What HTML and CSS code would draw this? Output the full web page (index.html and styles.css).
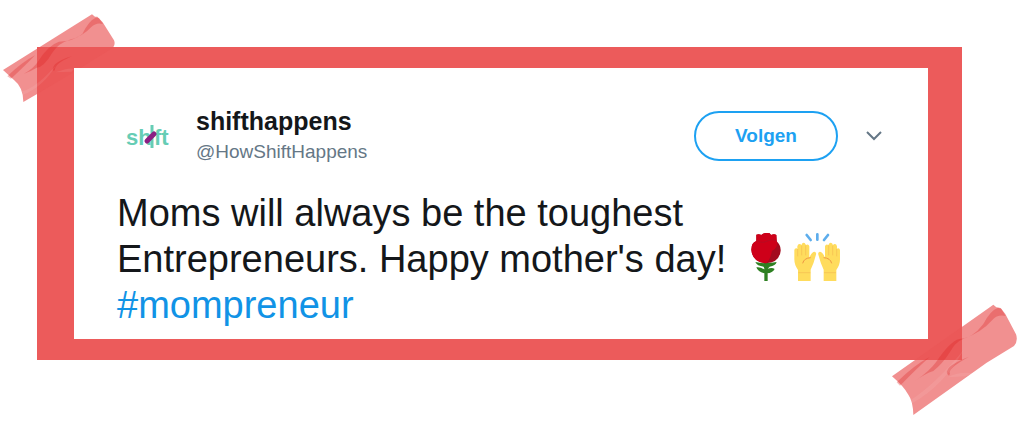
FILE: index.html
```html
<!DOCTYPE html>
<html lang="nl">
<head>
  <meta charset="UTF-8" />
  <meta name="viewport" content="width=device-width, initial-scale=1.0"/>
  <title>shifthappens</title>
  <link rel="stylesheet" href="styles.css">
</head>
<body>
  <main class="frame">
    <svg class="tape tape-top" viewBox="0 0 390 345" aria-hidden="true">
      <path class="tape-base" d="M9 210 L276 43 L285 50 L292 50 L308 67 L342 121 Q347 132 339 143 L222 216 L110 283 L70 306 Q70 262 42 240 Z"/>
      <path class="crease" d="M22 229 Q65 187 105 166 Q82 191 33 236 Z"/>
      <path class="crease" d="M72 221 Q103 204 115 183 Q145 135 177 125 Q220 124 247 102 Q266 62 287 53 L297 54 L309 72 Q289 66 274 81 Q248 110 205 121 Q176 130 157 158 Q132 201 110 203 Q92 214 72 221 Z"/>
      <path class="crease" d="M159 212 Q153 188 215 169 Q162 192 165 211 Z"/>
      <path class="shine" d="M66 274 Q110 263 169 194 Q130 260 69 284 Z"/>
      <path class="shine" d="M166 217 Q205 202 222 206 L215 215 Z"/>
    </svg>
    <svg class="tape tape-bottom" viewBox="0 0 432 378" aria-hidden="true">
      <path class="tape-base" d="M36 244 L340 29 L349 37 L362 39 L376 57 L408 118 Q415 137 402 153 L320 203 L100 360 Q99 318 85 299 Q72 275 36 244 Z"/>
      <path class="crease" d="M50 262 Q101 211 149 186 Q118 213 60 272 Z"/>
      <path class="crease" d="M105 258 Q148 230 170 199 Q210 139 238 132 Q276 132 310 87 Q330 47 354 38 L364 42 L377 63 Q352 58 337 75 Q305 112 249 132 Q226 141 210 171 Q187 207 160 228 Q135 236 105 258 Z"/>
      <path class="crease" d="M207 242 Q180 219 267 185 Q200 222 210 236 Z"/>
      <path class="shine" d="M91 316 Q169 266 253 162 Q190 273 96 325 Z"/>
      <path class="shine" d="M204 247 Q235 228 283 235 L256 244 Z"/>
    </svg>

    <article class="card">
      <header class="card-header">
        <svg class="avatar" viewBox="0 0 61 49" role="img" aria-label="shift">
          <text x="9" y="33">sh</text>
          <text x="37" y="33">ft</text>
          <path class="avatar-bar" d="M35 13 V36"/>
          <path class="avatar-mark" d="M30 29 L37 22"/>
        </svg>
        <div class="author">
          <strong class="name">shifthappens</strong>
          <a class="handle" href="#">@HowShiftHappens</a>
        </div>
        <button type="button" class="follow-btn">Volgen</button>
        <button type="button" class="menu-btn" aria-label="Meer">
          <svg viewBox="0 0 18 12"><path d="M2 2 L9 9 L16 2"/></svg>
        </button>
      </header>

      <p class="message">
        Moms will always be the toughest<br>
        Entrepreneurs. Happy mother's day!
        <span class="emojis"><svg class="emoji" viewBox="0 0 144 144" role="img" aria-label="roos">
          <path fill="#2e8022" d="M67 82 H77 V144 H67 Z M40 87 Q71 94 104 87 Q101 98 83 101 L77 107 Q91 103 98 108 Q92 120 75 121 L68 121 Q48 118 43 103 Q56 101 68 110 L65 101 Q45 99 40 87 Z"/>
          <path fill="#a30b1e" d="M28 50 Q28 29 43 24 L43 5 Q51 2 58 6 Q67 -3 83 1 L87 6 Q97 2 103 6 L104 25 Q117 37 116 53 Q112 89 72 91 Q31 88 28 50 Z"/>
          <path fill="#ce0019" d="M28 50 Q28 29 43 24 L43 5 Q51 2 58 6 Q67 -3 83 1 L87 6 Q97 2 103 6 L104 23 Q110 44 90 53 Q85 81 72 91 Q31 88 28 50 Z"/>
          <path fill="none" stroke="#b80b22" stroke-width="3" d="M44 22 Q59 33 76 24 Q91 16 103 23"/>
        </svg><svg class="emoji" viewBox="0 0 144 144" role="img" aria-label="handen omhoog">
          <g id="hand">
            <path fill="#ffdc5d" d="M12 144 V111 Q1 96 1 79 V51 Q2 45 8 46 L10 48 V40 Q12 31 20 34 L22 37 Q24 26 32 30 L36 36 Q44 32 46 40 V75 Q52 57 62 56 Q69 58 65 68 Q59 92 50 110 V144 Z"/>
            <path fill="none" stroke="#ef9645" stroke-width="3" d="M50 74 Q30 75 26 91"/>
            <path fill="none" stroke="#f5bd51" stroke-width="2" d="M13 119 H49 M11 48 V70 M23 38 V67 M35 37 V67"/>
          </g>
          <use href="#hand" transform="translate(139 0) scale(-1 1)"/>
          <path fill="none" stroke="#5dadec" stroke-width="8" stroke-linecap="round" d="M38 6 L50 21 M70 4 V20 M102 6 L90 21"/>
        </svg></span><br>
        <a class="hashtag" href="#">#mompreneur</a>
      </p>
    </article>
  </main>
</body>
</html>
```
FILE: styles.css
```css
body {
  margin: 0;
  padding: 47px 62px 61px 37px;
  background-color: #fff;
  color: #14171a;
  font-family: "Liberation Sans", Arial, sans-serif;
}

.frame {
  position: relative;
  padding: 21px 34px 21px 37px;
  background-color: #ec5b5b;
}

/* tape strips over the corners of the frame */
.tape {
  position: absolute;
  pointer-events: none;
}

.tape-top {
  top: -47px;
  left: -37px;
  width: 130px;
}

.tape-bottom {
  right: -62px;
  bottom: -61px;
  width: 144px;
}

.tape-base { fill: #ea5656; fill-opacity: 0.66; }
.crease { fill: #d92222; fill-opacity: 0.3; }
.shine { fill: #fff; fill-opacity: 0.08; }

.card {
  position: relative;
  padding: 42px 45px 11px 43px;
  background-color: #fff;
}

.card-header {
  display: flex;
  align-items: center;
}

.avatar {
  width: 61px;
  height: 49px;
  margin-right: 18px;
}

.avatar text {
  fill: #66cdb5;
  font-size: 22px;
  font-weight: bold;
}

.avatar-bar { stroke: #66cdb5; stroke-width: 3; }
.avatar-mark { stroke: #8b1f83; stroke-width: 5; stroke-linecap: round; }

.author {
  flex: 1;
  display: flex;
  flex-direction: column;
  gap: 10px;
}

.name {
  font-size: 25px;
  line-height: 22px;
}

.handle {
  color: #657786;
  font-size: 19px;
  line-height: 20px;
  text-decoration: none;
}

.follow-btn {
  width: 144px;
  height: 50px;
  border: 2px solid #1da1f2;
  border-radius: 25px;
  background-color: transparent;
  color: #1da1f2;
  font-family: inherit;
  font-size: 19px;
  font-weight: bold;
  cursor: pointer;
}

.menu-btn {
  margin-left: 27px;
  padding: 0;
  border: none;
  background: none;
  cursor: pointer;
}

.menu-btn svg {
  display: block;
  width: 18px;
  height: 12px;
  fill: none;
  stroke: #657786;
  stroke-width: 2;
}

.message {
  margin: 28px 0 0;
  font-size: 38px;
  line-height: 46px;
}

.emojis {
  display: inline-flex;
  gap: 4px;
  margin: -4px 0 0 5px;
  vertical-align: -9px;
}

.emoji {
  width: 48px;
  height: 48px;
}

.hashtag {
  color: #1193e6;
  text-decoration: none;
}
```
